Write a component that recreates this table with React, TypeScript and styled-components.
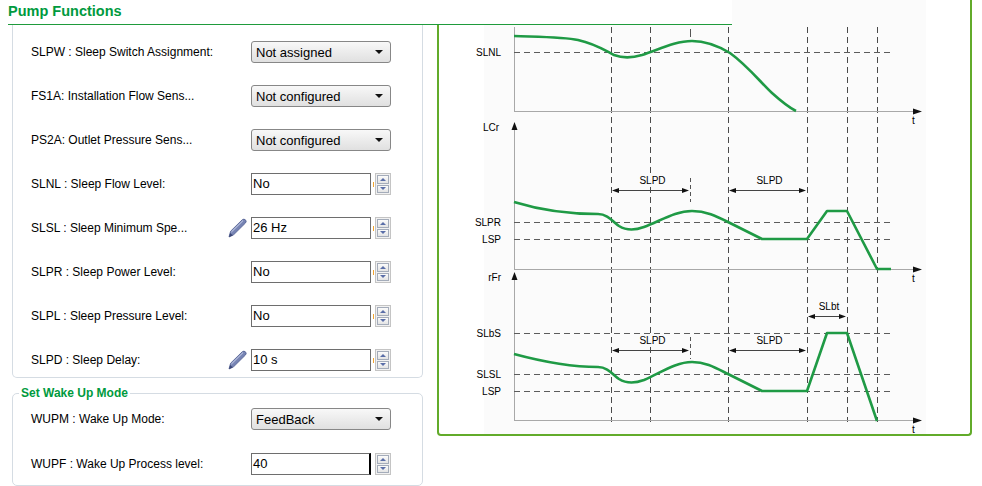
import React from 'react';
import styled, { createGlobalStyle } from 'styled-components';

const GlobalStyle = createGlobalStyle`
  html, body {
    margin: 0;
    padding: 0;
    background: #fff;
  }
  body {
    font-family: "Liberation Sans", Arial, sans-serif;
    color: #000;
    overflow: hidden;
  }
`;

const Page = styled.div`
  display: grid;
  grid-template-columns: 437px 535px;
  grid-template-rows: 25px auto;
  height: 486px;
  overflow: hidden;
`;

const Header = styled.h2`
  grid-column: 1 / 3;
  grid-row: 1;
  z-index: 1;
  width: 724px;
  height: 24px;
  margin: 0 0 0 8px;
  background: #fff;
  border-bottom: 1px solid #1f9b3c;
  font-size: 14.5px;
  font-weight: bold;
  line-height: 23px;
  color: #009a3e;
`;

const LeftColumn = styled.div`
  grid-column: 1;
  grid-row: 2;
  padding-left: 12px;
`;

const Group = styled.div<{ $cut?: boolean }>`
  box-sizing: border-box;
  width: 411px;
  border: 1px solid #d5dce3;
  border-top: ${(p) => (p.$cut ? 'none' : '1px solid #d5dce3')};
  border-radius: ${(p) => (p.$cut ? '0 0 5px 5px' : '5px')};
  margin-top: ${(p) => (p.$cut ? '0' : '15px')};
  padding: ${(p) => (p.$cut ? '16px 0 6px 18px' : '0 0 10px 18px')};
`;

const Legend = styled.div`
  width: fit-content;
  margin: -8px 0 8px -12px;
  padding: 0 2px;
  background: #fff;
  font-size: 12px;
  font-weight: bold;
  line-height: 14px;
  color: #009a3e;
`;

const Rows = styled.div<{ $gap: number }>`
  display: flex;
  flex-direction: column;
  gap: ${(p) => p.$gap}px;
`;

const Row = styled.div`
  display: grid;
  grid-template-columns: 197px 23px 140px;
  align-items: center;
  height: 22px;
`;

const Label = styled.span`
  font-size: 12px;
  white-space: nowrap;
`;

const IconCell = styled.span`
  display: flex;
  align-items: center;
  height: 22px;
`;

const Select = styled.div`
  display: flex;
  align-items: center;
  justify-content: space-between;
  box-sizing: border-box;
  width: 140px;
  height: 22px;
  padding: 0 7px 0 4px;
  border: 1px solid #878787;
  border-radius: 3px;
  background: linear-gradient(#f8f8f8, #e0e0e0);
  font-size: 13px;
`;

const Caret = styled.span`
  width: 0;
  height: 0;
  border-left: 4px solid transparent;
  border-right: 4px solid transparent;
  border-top: 4px solid #111;
`;

const Spinner = styled.div`
  display: flex;
  align-items: stretch;
  width: 140px;
  height: 22px;
`;

const SpinInput = styled.div<{ $focused?: boolean }>`
  box-sizing: border-box;
  width: 120px;
  border: 1px solid #6e6e6e;
  border-right: ${(p) => (p.$focused ? '2px solid #000' : '1px solid #6e6e6e')};
  background: #fff;
  font-size: 13px;
  line-height: 20px;
  padding-left: 1px;
`;

const EditMark = styled.span<{ $show: boolean }>`
  display: flex;
  align-items: center;
  justify-content: center;
  width: 4px;
  &::before {
    content: '';
    display: ${(p) => (p.$show ? 'block' : 'none')};
    width: 1px;
    height: 5px;
    background: #f2a530;
  }
`;

const SpinButtons = styled.div`
  display: flex;
  flex-direction: column;
  gap: 1px;
  box-sizing: border-box;
  width: 16px;
  padding: 1px;
  border: 1px solid #c4c4c4;
  background: #f1f1f1;
`;

const SpinButton = styled.span<{ $down?: boolean }>`
  flex: 1;
  display: flex;
  align-items: center;
  justify-content: center;
  border: 1px solid #a4acba;
  background: linear-gradient(#fbfbfb, #e4e4e4);
  &::before {
    content: '';
    width: 0;
    height: 0;
    border-left: 3px solid transparent;
    border-right: 3px solid transparent;
    ${(p) => (p.$down ? 'border-top: 3px solid #5a6ea8;' : 'border-bottom: 3px solid #5a6ea8;')}
  }
`;

const ChartPanel = styled.div`
  grid-column: 2;
  grid-row: 1 / 3;
  align-self: start;
  box-sizing: border-box;
  width: 535px;
  height: 436px;
  border: 2px solid #62ab2a;
  border-top: none;
  border-radius: 0 0 4px 4px;
  background: #fff;
`;

const ChartSvg = styled.svg`
  display: block;
  font-family: "Liberation Sans", Arial, sans-serif;
  font-size: 10px;
`;

type Field =
  | { kind: 'select'; label: string; value: string }
  | { kind: 'spin'; label: string; value: string; edited?: boolean; focused?: boolean };

const sleepFields: Field[] = [
  { kind: 'select', label: 'SLPW : Sleep Switch Assignment:', value: 'Not assigned' },
  { kind: 'select', label: 'FS1A: Installation Flow Sens...', value: 'Not configured' },
  { kind: 'select', label: 'PS2A: Outlet Pressure Sens...', value: 'Not configured' },
  { kind: 'spin', label: 'SLNL : Sleep Flow Level:', value: 'No' },
  { kind: 'spin', label: 'SLSL : Sleep Minimum Spe...', value: '26 Hz', edited: true },
  { kind: 'spin', label: 'SLPR : Sleep Power Level:', value: 'No' },
  { kind: 'spin', label: 'SLPL : Sleep Pressure Level:', value: 'No' },
  { kind: 'spin', label: 'SLPD : Sleep Delay:', value: '10 s', edited: true },
];

const wakeFields: Field[] = [
  { kind: 'select', label: 'WUPM : Wake Up Mode:', value: 'FeedBack' },
  { kind: 'spin', label: 'WUPF : Wake Up Process level:', value: '40', focused: true },
];

const PencilIcon = () => (
  <svg width="19" height="20" viewBox="0 0 19 20">
    <defs>
      <linearGradient id="pen" x1="0" y1="0" x2="1" y2="1">
        <stop offset="0" stopColor="#9aa6cf" />
        <stop offset="1" stopColor="#56649a" />
      </linearGradient>
    </defs>
    <path
      d="M1 19 L2.6 13.2 L14.2 1.8 Q16 0.4 17.5 1.9 Q19 3.4 17.4 5.1 L5.8 16.6 Z"
      fill="url(#pen)"
      stroke="#4d5b8e"
      strokeWidth="0.8"
      strokeLinejoin="round"
    />
    <path d="M3.4 14 L15 2.6" stroke="#c9d0ea" strokeWidth="1" />
    <path d="M1 19 L2.2 15 L4.9 17.6 Z" fill="#3d4878" />
  </svg>
);

const FieldRow = ({ field }: { field: Field }) => (
  <Row>
    <Label>{field.label}</Label>
    <IconCell>{field.kind === 'spin' && field.edited && <PencilIcon />}</IconCell>
    {field.kind === 'select' ? (
      <Select>
        {field.value}
        <Caret />
      </Select>
    ) : (
      <Spinner>
        <SpinInput $focused={field.focused}>{field.value}</SpinInput>
        <EditMark $show={!field.focused} />
        <SpinButtons>
          <SpinButton />
          <SpinButton $down />
        </SpinButtons>
      </Spinner>
    )}
  </Row>
);

// chart, drawn in page coordinates
const GREEN = '#1f9a45';
const CHART_BG = '#fbfbfb';
const DASH = '6 4';
const vLines = [611, 650, 728, 807, 847, 877];

const HDash = ({ y }: { y: number }) => (
  <line x1={514} x2={893} y1={y + 0.5} y2={y + 0.5} stroke="#5c5c5c" strokeDasharray={DASH} />
);

const AxisX = ({ y }: { y: number }) => (
  <g>
    <line x1={514} x2={916} y1={y + 0.5} y2={y + 0.5} stroke="#a8a8a8" />
    <polygon points={`922,${y + 0.5} 913,${y - 2.5} 913,${y + 3.5}`} fill="#111" />
    <text x={912} y={y + 13}>t</text>
  </g>
);

const AxisY = ({ top, bottom, arrow }: { top: number; bottom: number; arrow?: boolean }) => (
  <g>
    <line x1={514.5} x2={514.5} y1={top} y2={bottom} stroke="#a8a8a8" />
    {arrow && <polygon points={`514.5,${top - 1} 511.5,${top + 7} 517.5,${top + 7}`} fill="#111" />}
  </g>
);

const DimArrow = ({ x1, x2, y, label }: { x1: number; x2: number; y: number; label: string }) => {
  const cx = (x1 + x2) / 2 + 2;
  const w = label.length * 6.5 + 4;
  return (
    <g>
      <rect x={cx - w / 2} y={y - 16} width={w} height={12} fill={CHART_BG} />
      <line x1={x1 + 3} x2={x2 - 3} y1={y + 0.5} y2={y + 0.5} stroke="#444" />
      <polygon points={`${x1 + 1},${y + 0.5} ${x1 + 8},${y - 2} ${x1 + 8},${y + 3}`} fill="#111" />
      <polygon points={`${x2 - 1},${y + 0.5} ${x2 - 8},${y - 2} ${x2 - 8},${y + 3}`} fill="#111" />
      <text x={cx} y={y - 6.5} textAnchor="middle">
        {label}
      </text>
    </g>
  );
};

const LevelLabel = ({ y, text }: { y: number; text: string }) => (
  <text x={501} y={y + 4} textAnchor="end">
    {text}
  </text>
);

const Curve = ({ d }: { d: string }) => (
  <path d={d} fill="none" stroke={GREEN} strokeWidth={2.6} strokeLinejoin="round" />
);

const SleepChart = () => (
  <ChartSvg width={531} height={434} viewBox="439 0 531 434">
    <rect x={484} y={0} width={442} height={434} fill={CHART_BG} />
    {vLines.map((x) => (
      <line key={x} x1={x + 0.5} x2={x + 0.5} y1={27} y2={422} stroke="#4a4a4a" strokeDasharray={DASH} />
    ))}
    <line x1={690.5} x2={690.5} y1={29} y2={37} stroke="#555" />

    {/* flow */}
    <AxisY top={27} bottom={111} />
    <HDash y={52} />
    <LevelLabel y={52} text="SLNL" />
    <AxisX y={111} />
    <Curve d="M514,36 C545,37 565,37 578,40 C596,44 606,51 614,55 C622,58 632,58 642,55 C660,49 676,41 692,41 C708,41 720,47 730,53 C748,66 762,84 772,93 C782,102 790,108 796,111" />

    {/* power */}
    <text x={499} y={131} textAnchor="end">
      LCr
    </text>
    <AxisY top={123} bottom={269} arrow />
    <HDash y={222} />
    <HDash y={239} />
    <LevelLabel y={222} text="SLPR" />
    <LevelLabel y={239} text="LSP" />
    <DimArrow x1={611} x2={690} y={190} label="SLPD" />
    <DimArrow x1={728} x2={807} y={190} label="SLPD" />
    <line x1={690.5} x2={690.5} y1={178} y2={202} stroke="#555" strokeDasharray="4 3" />
    <AxisX y={269} />
    <Curve d="M514,202 C540,210 570,214 598,214 C608,214 613,222 619,226 C627,231 636,230 644,227 C662,220 676,211 692,211 C706,211 716,216 728,222 L762,239 L807,239 L827,211 L847,211 L877,269 L891,269" />

    {/* speed */}
    <text x={501} y={281} textAnchor="end">
      rFr
    </text>
    <AxisY top={273} bottom={420} arrow />
    <HDash y={333} />
    <HDash y={374} />
    <HDash y={391} />
    <LevelLabel y={333} text="SLbS" />
    <LevelLabel y={374} text="SLSL" />
    <LevelLabel y={391} text="LSP" />
    <DimArrow x1={807} x2={847} y={316} label="SLbt" />
    <DimArrow x1={611} x2={690} y={350} label="SLPD" />
    <DimArrow x1={728} x2={807} y={350} label="SLPD" />
    <line x1={690.5} x2={690.5} y1={337} y2={359} stroke="#555" strokeDasharray="4 3" />
    <AxisX y={420} />
    <Curve d="M514,354 C540,361 570,367 598,367 C608,367 613,375 619,379 C627,384 636,383 644,380 C662,372 676,362 692,362 C706,362 716,368 728,374 L762,391 L807,391 L827,333 L847,333 L877,421" />
  </ChartSvg>
);

export default function App() {
  return (
    <>
      <GlobalStyle />
      <Page>
        <Header>Pump Functions</Header>
        <LeftColumn>
          <Group $cut>
            <Rows $gap={22}>
              {sleepFields.map((f) => (
                <FieldRow key={f.label} field={f} />
              ))}
            </Rows>
          </Group>
          <Group>
            <Legend>Set Wake Up Mode</Legend>
            <Rows $gap={23}>
              {wakeFields.map((f) => (
                <FieldRow key={f.label} field={f} />
              ))}
            </Rows>
          </Group>
        </LeftColumn>
        <ChartPanel>
          <SleepChart />
        </ChartPanel>
      </Page>
    </>
  );
}
